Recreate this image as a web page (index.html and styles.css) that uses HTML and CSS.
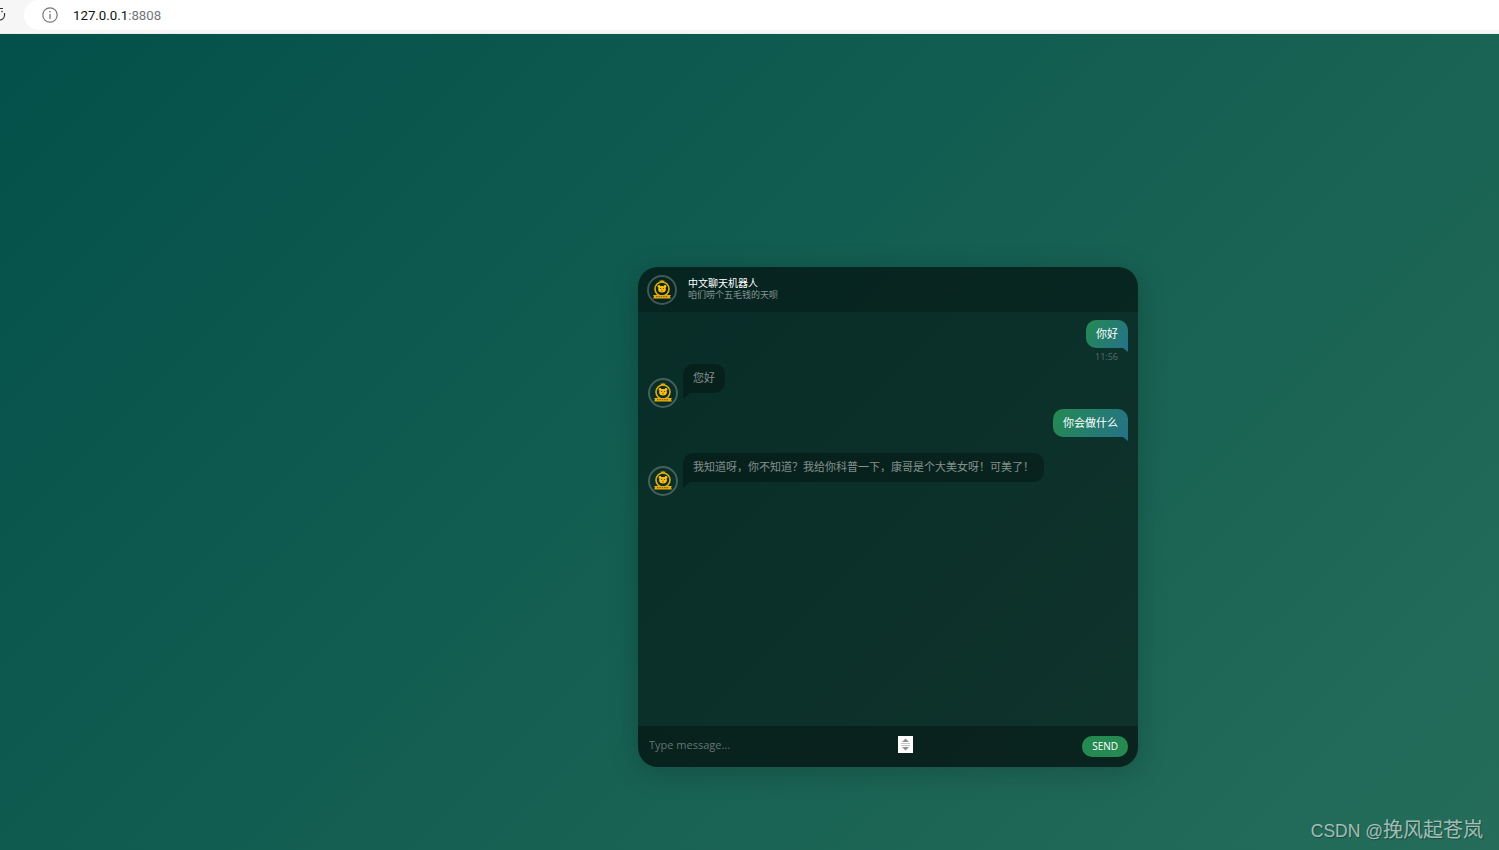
FILE: index.html
```html
<!DOCTYPE html>
<html lang="zh-CN">
<head>
  <meta charset="UTF-8" />
  <meta name="viewport" content="width=device-width, initial-scale=1.0"/>
  <title>中文聊天机器人</title>
  <link rel="stylesheet" href="styles.css">
</head>
<body>
  <svg class="defs" aria-hidden="true">
    <symbol id="badge" viewBox="2 2 26 26">
      <path d="M13.200 7.200l-.6-2.200 1.500 1 .9-1.600.9 1.600 1.500-1-.6 2.200z" fill="#e5ad0c"/>
      <circle cx="15" cy="14" r="7" fill="none" stroke="#e5ad0c" stroke-width="1.600"/>
      <circle cx="12" cy="11.400" r="1.400" fill="#ffc20e"/>
      <circle cx="18" cy="11.400" r="1.400" fill="#ffc20e"/>
      <ellipse cx="15" cy="14.200" rx="3.800" ry="3.300" fill="#ffc20e"/>
      <circle cx="13.600" cy="13.500" r=".6" fill="#4a3206"/>
      <circle cx="16.400" cy="13.500" r=".6" fill="#4a3206"/>
      <ellipse cx="15" cy="15.500" rx="1.300" ry=".9" fill="#e07f10"/>
      <path d="M6 20h18l-1 1.700 1 1.700H6l1-1.700z" fill="#e5ad0c"/>
      <path d="M9 21.700h12" stroke="#8a3d0c" stroke-width="1" stroke-dasharray="1.400 1"/>
    </symbol>
  </svg>

  <header class="browser-bar">
    <svg class="reload" viewBox="0 0 8 16" width="8" height="16">
      <path d="M4.500 6v2.500a5 5 0 0 1-5 4.500M0 1.500h3M1.500 4l1 1" fill="none" stroke="#333" stroke-width="1.200"/>
    </svg>
    <div class="address">
      <svg class="info" viewBox="0 0 16 16" width="16" height="16">
        <circle cx="8" cy="8" r="7.200" fill="none" stroke="#777" stroke-width="1.200"/>
        <path d="M8 7v5M8 4v1.600" stroke="#777" stroke-width="1.300"/>
      </svg>
      <span class="host">127.0.0.1</span><span class="port">:8808</span>
    </div>
  </header>

  <main class="page">
    <section class="chat">
      <div class="chat-title">
        <div class="avatar"><svg><use href="#badge"/></svg></div>
        <div class="title-text">
          <h1>中文聊天机器人</h1>
          <h2>咱们唠个五毛钱的天呗</h2>
        </div>
      </div>

      <div class="messages">
        <div class="message personal">你好<span class="timestamp">11:56</span></div>
        <div class="row">
          <div class="avatar hang"><svg><use href="#badge"/></svg></div>
          <div class="message">您好</div>
        </div>
        <div class="message personal">你会做什么</div>
        <div class="row">
          <div class="avatar hang"><svg><use href="#badge"/></svg></div>
          <div class="message">我知道呀，你不知道？我给你科普一下，康哥是个大美女呀！可美了！</div>
        </div>
      </div>

      <div class="message-box">
        <input class="message-input" type="text" placeholder="Type message...">
        <div class="spinner">
          <svg viewBox="0 0 15 17" width="15" height="17">
            <path d="M7.500 2.500l3.500 3.500h-7zM7.500 14.500l3.500-3.500h-7z" fill="#8f8f8f"/>
            <path d="M3 7.500h9M3 9.500h9" stroke="#b5b5b5" stroke-width=".8"/>
          </svg>
        </div>
        <button class="message-submit">Send</button>
      </div>
    </section>
  </main>

  <div class="watermark"><span class="latin">CSDN @</span>挽风起苍岚</div>
</body>
</html>
```

FILE: styles.css
```css
* {
  box-sizing: border-box;
}
html, body {
  height: 100%;
}
body {
  margin: 0;
  display: flex;
  flex-direction: column;
  overflow: hidden;
  font-family: "Open Sans", "Noto Sans CJK SC", sans-serif;
  background: linear-gradient(135deg, #03504a, #256d5a);
}
.defs {
  display: none;
}

/* browser chrome */
.browser-bar {
  height: 34px;
  flex: none;
  background: #f6f6f6;
  border-bottom: 1px solid #eee;
  display: flex;
  align-items: flex-start;
}
.reload {
  margin-top: 7px;
  flex: none;
}
.address {
  flex: 1;
  margin-left: 16px;
  height: 30px;
  padding-left: 18px;
  display: flex;
  align-items: center;
  border-radius: 15px 0 0 15px;
  background: #fff;
  font-family: Roboto, "Liberation Sans", sans-serif;
  font-size: 13.25px;
}
.info {
  margin-right: 15px;
}
.host { color: #111; }
.port { color: #70757a; }

/* chat card */
.page {
  flex: 1;
  padding: 233px 0 0 638px;
}
.chat {
  width: 500px;
  height: 500px;
  display: flex;
  flex-direction: column;
  overflow: hidden;
  border-radius: 20px;
  background: rgba(0,0,0,0.5);
  box-shadow: 0 5px 30px rgba(0,0,0,0.2);
  color: rgba(255,255,255,0.5);
}
.chat-title {
  flex: 0 0 45px;
  display: flex;
  align-items: center;
  gap: 11px;
  padding: 0 9px;
  background: rgba(0,0,0,0.2);
}
.title-text {
  display: flex;
  flex-direction: column;
  gap: 1px;
  padding-bottom: 1px;
}
.chat-title h1 {
  margin: 0;
  font-size: 10px;
  font-weight: normal;
  line-height: 11px;
  color: #fff;
}
.chat-title h2 {
  margin: 0;
  font-size: 9px;
  font-weight: normal;
  line-height: 10px;
  color: rgba(255,255,255,0.5);
}
.avatar {
  flex: none;
  width: 30px;
  height: 30px;
  border: 2px solid rgba(255,255,255,0.24);
  border-radius: 50%;
  overflow: hidden;
}
.avatar svg {
  display: block;
  width: 26px;
  height: 26px;
}

/* messages */
.messages {
  flex: 1;
  display: flex;
  flex-direction: column;
  align-items: flex-start;
  gap: 16px;
  padding: 8px 10px 0;
}
.row {
  display: flex;
  align-items: flex-start;
  gap: 5px;
}
.hang {
  margin-top: 13.15px;
  margin-bottom: -14.75px;
}
.message {
  position: relative;
  padding: 6px 10px 7px;
  border-radius: 10px 10px 10px 0;
  background: rgba(0,0,0,0.3);
  font-size: 11px;
  line-height: 1.4;
  white-space: nowrap;
}
.message::before {
  content: "";
  position: absolute;
  left: 0;
  bottom: -6px;
  border-top: 6px solid rgba(0,0,0,0.3);
  border-right: 7px solid transparent;
}
.message.personal {
  align-self: flex-end;
  color: #fff;
  border-radius: 10px 10px 0 10px;
  background: linear-gradient(120deg, #248a52, #257287);
}
.message.personal::before {
  left: auto;
  right: 0;
  bottom: -4px;
  border-top: 4px solid #257287;
  border-right: none;
  border-left: 5px solid transparent;
}
.timestamp {
  position: absolute;
  left: 9px;
  bottom: -15px;
  font-size: 9px;
  line-height: 12px;
  color: rgba(255,255,255,0.3);
}

/* input row */
.message-box {
  flex: 0 0 41px;
  display: flex;
  align-items: flex-start;
  padding: 10px;
  background: rgba(0,0,0,0.3);
}
.message-input {
  width: 250px;
  height: 17px;
  padding: 0 0 0 1px;
  border: none;
  outline: none;
  background: none;
  font-family: inherit;
  font-size: 11px;
  color: rgba(255,255,255,0.7);
}
.message-input::placeholder {
  color: rgba(255,255,255,0.38);
}
.spinner {
  width: 15px;
  height: 17px;
  background: #fff;
}
.spinner svg {
  display: block;
}
.message-submit {
  margin-left: auto;
  padding: 4px 10px 6px;
  border: none;
  border-radius: 10px;
  background: #248a52;
  color: #fff;
  font-family: inherit;
  font-size: 10px;
  line-height: 1;
  height: 21px;
  text-transform: uppercase;
}

.watermark {
  position: absolute;
  right: 16px;
  bottom: 6px;
  font-family: "Liberation Sans", "Noto Sans CJK SC", sans-serif;
  font-size: 20px;
  line-height: 26px;
  color: rgba(255,255,255,0.6);
  text-shadow: 1px 1px 1px rgba(0,0,0,0.3);
}
.latin {
  font-size: 17.5px;
}
```
